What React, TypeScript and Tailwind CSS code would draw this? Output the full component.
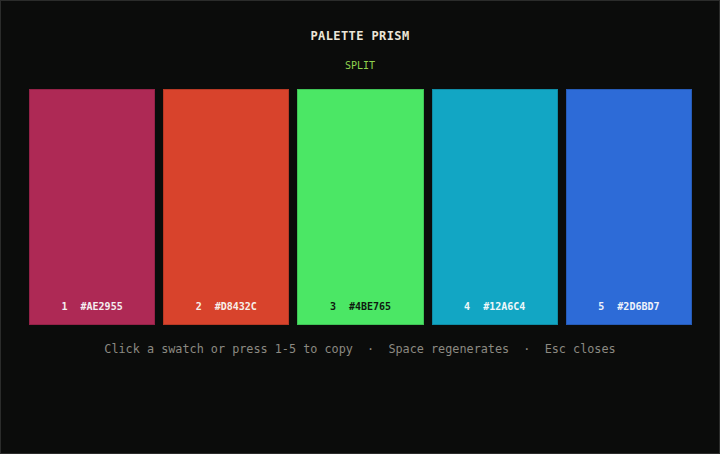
const swatches = [
  { n: 1, hex: '#AE2955', bg: 'bg-[#ae2955]', text: 'text-[#f4eef0]' },
  { n: 2, hex: '#D8432C', bg: 'bg-[#d8432c]', text: 'text-[#f7efe9]' },
  { n: 3, hex: '#4BE765', bg: 'bg-[#4be765]', text: 'text-[#0f1a10]' },
  { n: 4, hex: '#12A6C4', bg: 'bg-[#12a6c4]', text: 'text-[#eef8fa]' },
  { n: 5, hex: '#2D6BD7', bg: 'bg-[#2d6bd7]', text: 'text-[#eef2fb]' },
]

export default function App() {
  return (
    <div className="h-[454px] w-[720px] overflow-hidden border border-[#2b2c2b] bg-[#0b0c0b] font-['DejaVu_Sans_Mono',monospace] text-[#e6e2d6]">
      <div className="flex flex-col items-center px-[27px] pt-[27px]">
        <h1 className="text-[12px] leading-4 font-bold tracking-[0.4px] text-[#ebe6d8]">PALETTE PRISM</h1>
        <div className="mt-[15px] text-[10px] leading-[14px] text-[#8fd14f]">SPLIT</div>
        <div className="mt-4 flex w-full gap-2 pl-px">
          {swatches.map((s) => (
            <button
              key={s.n}
              className={`flex h-[236px] flex-1 items-end justify-center border border-black/15 pb-[11px] ${s.bg} ${s.text}`}
            >
              <span className="flex gap-[13px] text-[10px] leading-3 font-bold">
                <span>{s.n}</span>
                <span>{s.hex}</span>
              </span>
            </button>
          ))}
        </div>
        <p className="mt-4 text-[11.8px] leading-4 whitespace-pre text-[#8c8a82]">
          {'Click a swatch or press 1-5 to copy  ·  Space regenerates  ·  Esc closes'}
        </p>
      </div>
    </div>
  )
}
